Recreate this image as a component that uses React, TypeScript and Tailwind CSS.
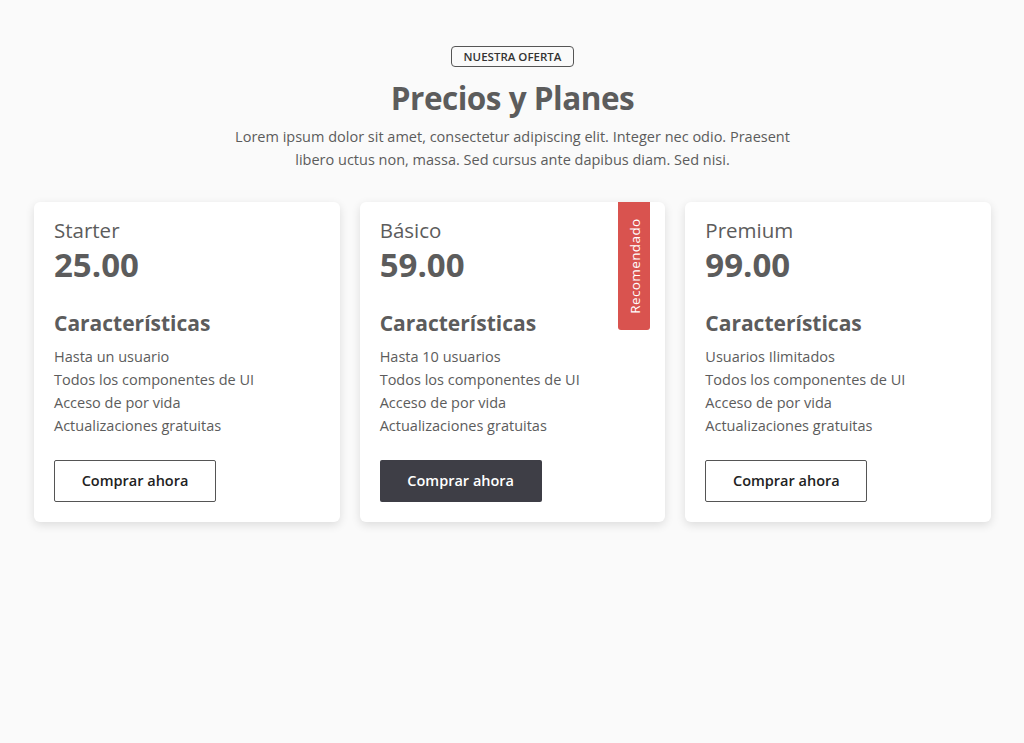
const plans = [
  {
    name: "Starter",
    price: "25.00",
    features: ["Hasta un usuario", "Todos los componentes de UI", "Acceso de por vida", "Actualizaciones gratuitas"],
    featured: false,
  },
  {
    name: "Básico",
    price: "59.00",
    features: ["Hasta 10 usuarios", "Todos los componentes de UI", "Acceso de por vida", "Actualizaciones gratuitas"],
    featured: true,
  },
  {
    name: "Premium",
    price: "99.00",
    features: ["Usuarios Ilimitados", "Todos los componentes de UI", "Acceso de por vida", "Actualizaciones gratuitas"],
    featured: false,
  },
];

const PlanCard = ({ plan }: { plan: (typeof plans)[number] }) => {
  return (
    <div className="relative bg-white rounded-md shadow-[0_3px_10px_rgba(0,0,0,0.12)] px-5 pt-[14px] pb-5">
      {plan.featured && (
        <div className="absolute top-0 right-[15px] w-8 h-32 bg-[#d9534f] rounded-b-[3px] flex items-center justify-center">
          <span className="block -rotate-90 whitespace-nowrap text-white text-[13.5px] tracking-[0.4px]">Recomendado</span>
        </div>
      )}
      <h3 className="text-[20.5px] leading-7 text-[#5c5c5c]">{plan.name}</h3>
      <p className="text-[33px] leading-[42px] font-bold text-[#5c5c5c]">{plan.price}</p>
      <h4 className="mt-[23px] text-[21px] leading-7 font-bold text-[#5c5c5c]">Características</h4>
      <ul className="mt-[8px] text-[14.5px] leading-[23px] text-[#5c5c5c]">
        {plan.features.map((f) => (
          <li key={f}>{f}</li>
        ))}
      </ul>
      <button
        className={
          plan.featured
            ? "mt-[23px] w-[162px] h-[42px] rounded-[2px] bg-[#3e3e46] text-white text-[14.5px] font-semibold"
            : "mt-[23px] w-[162px] h-[42px] rounded-[2px] border border-[#555] bg-white text-[#222] text-[14.5px] font-semibold"
        }
      >
        Comprar ahora
      </button>
    </div>
  );
};

const App = () => {
  return (
    <div className="min-h-[743px] bg-[#fafafa] font-['Open_Sans',sans-serif] pl-[34px] pr-[33px] pt-[46px]">
      <div className="flex flex-col items-center text-center">
        <span className="border border-[#555] rounded-[4px] px-3 h-[21px] flex items-center text-[11.5px] font-semibold text-[#333] uppercase">
          Nuestra oferta
        </span>
        <h2 className="mt-[9px] text-[31.5px] leading-[44px] font-bold text-[#5c5c5c] tracking-[-0.5px]">Precios y Planes</h2>
        <p className="mt-[5px] max-w-[575px] text-[14.5px] leading-[23px] text-[#5c5c5c]">
          Lorem ipsum dolor sit amet, consectetur adipiscing elit. Integer nec odio. Praesent libero uctus non, massa. Sed
          cursus ante dapibus diam. Sed nisi.
        </p>
      </div>
      <div className="mt-[31px] grid grid-cols-3 gap-5">
        {plans.map((p) => (
          <PlanCard key={p.name} plan={p} />
        ))}
      </div>
    </div>
  );
};

export default App;
